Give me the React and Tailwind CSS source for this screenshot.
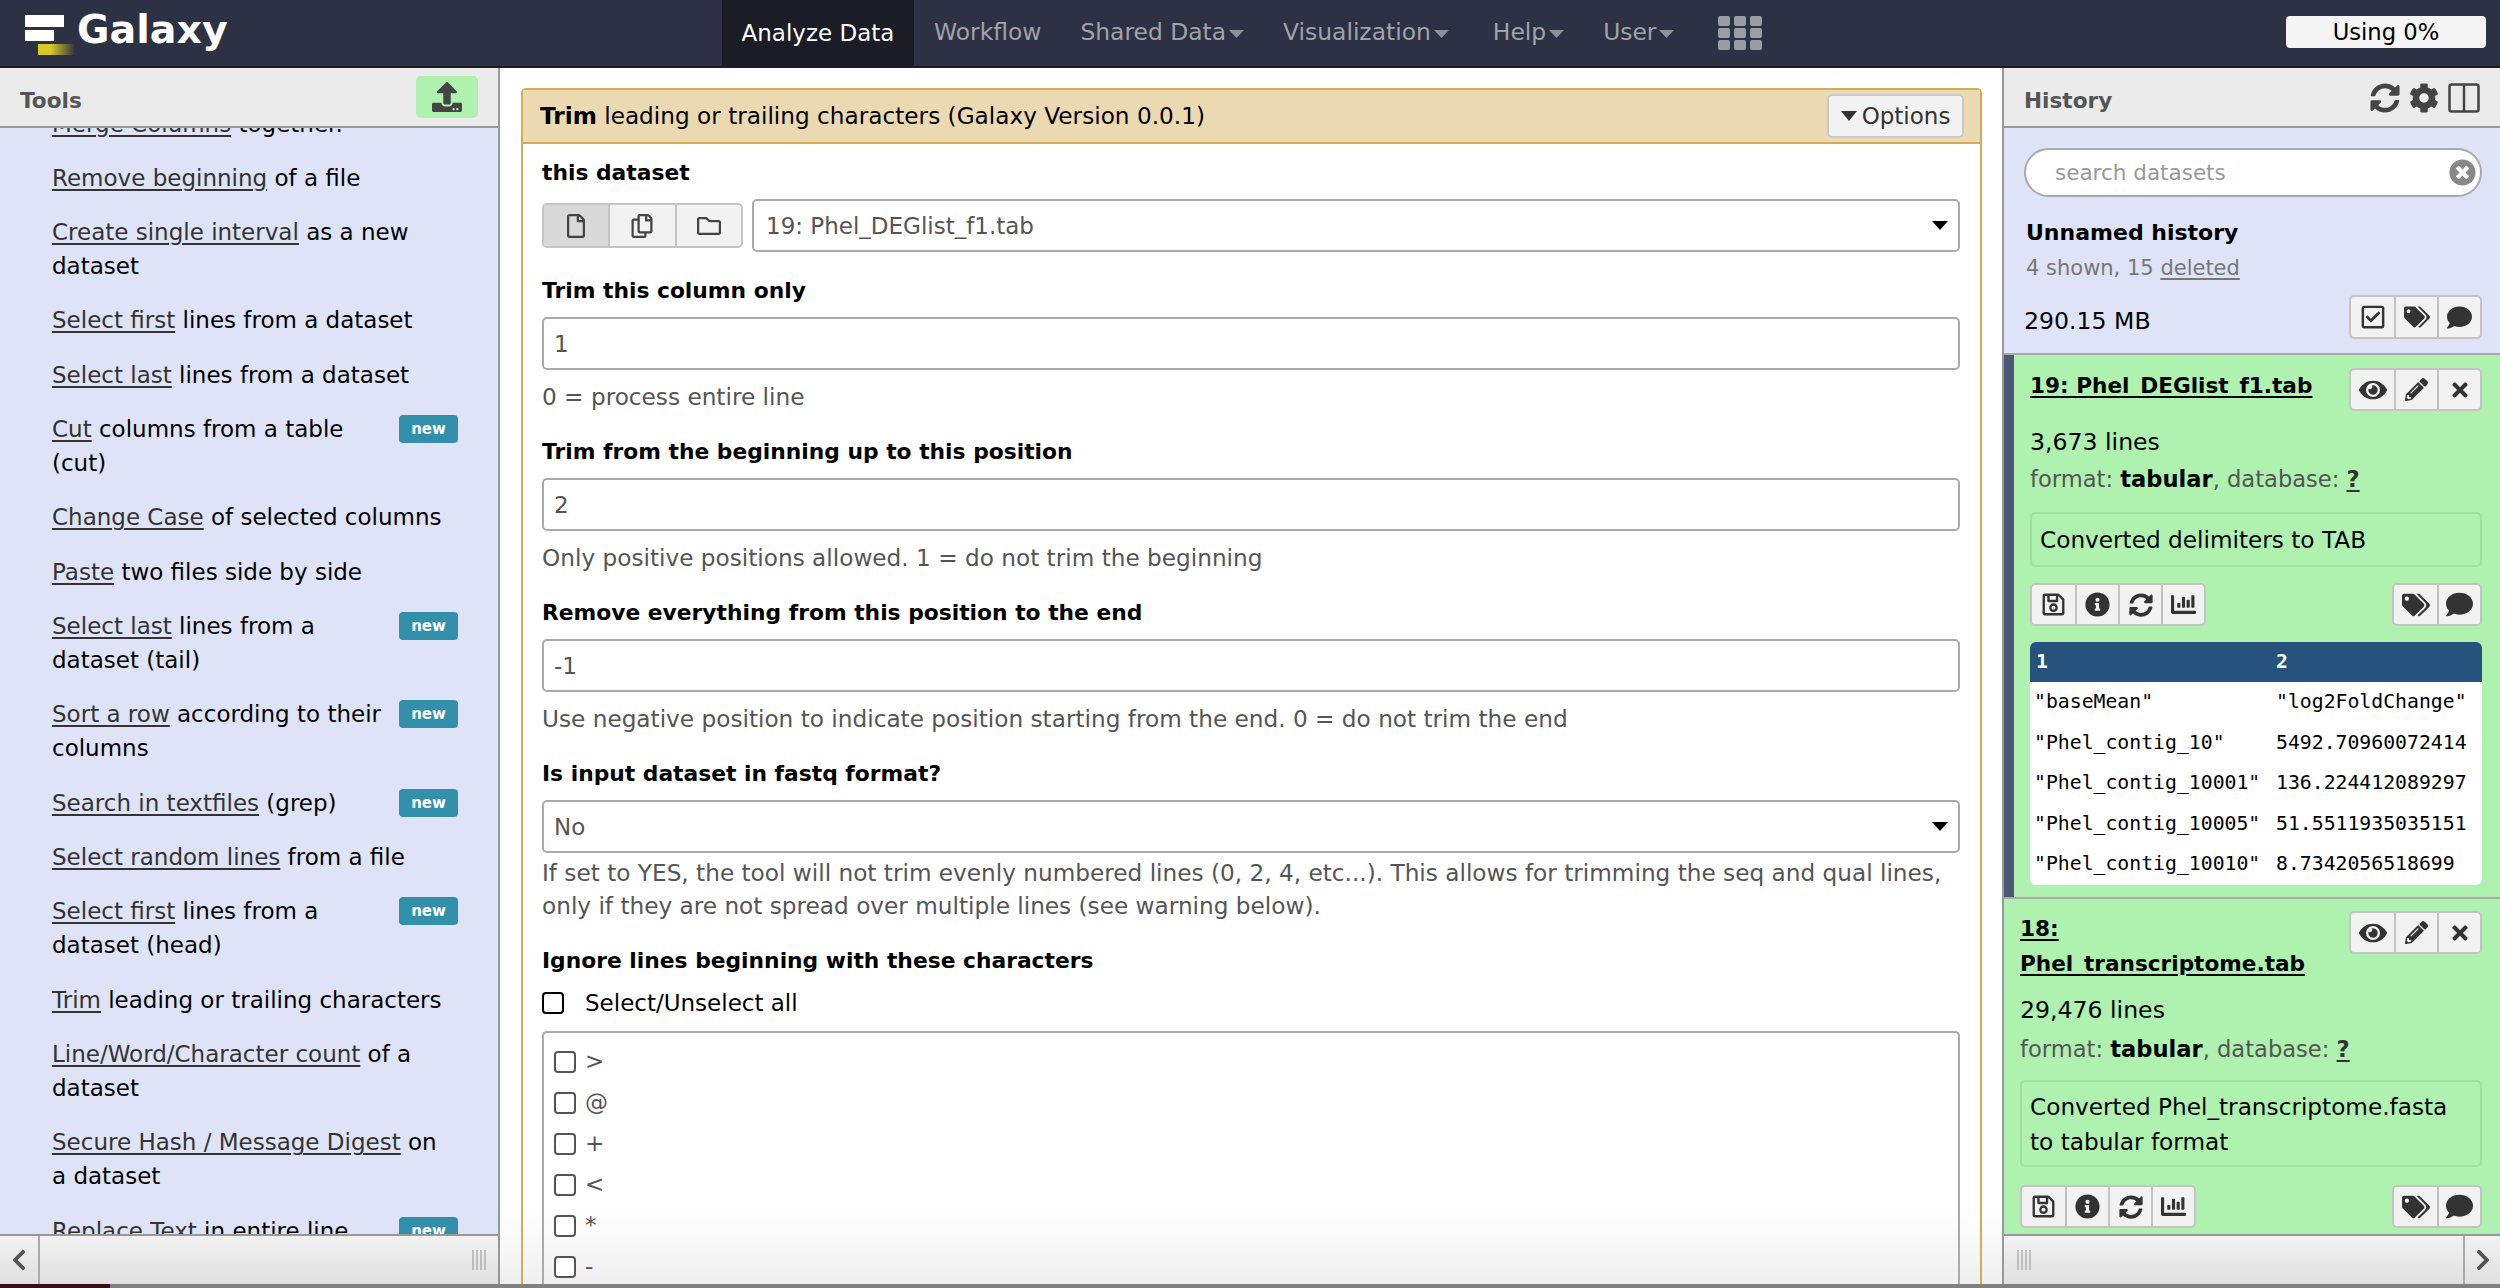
import React from "react";
import {
  FaUpload, FaRegFile, FaRegCopy, FaRegFolder, FaSyncAlt, FaCog,
  FaTimesCircle, FaRegCheckSquare, FaTags, FaComment, FaEye, FaPencilAlt, FaTimes,
  FaRegSave, FaInfoCircle, FaChartBar, FaChevronLeft, FaChevronRight,
} from "react-icons/fa";

const tools = [
  { lines: [["Merge Columns", " together."]] },
  { lines: [["Remove beginning", " of a file"]] },
  { lines: [["Create single interval", " as a new"], ["", "dataset"]] },
  { lines: [["Select first", " lines from a dataset"]] },
  { lines: [["Select last", " lines from a dataset"]] },
  { lines: [["Cut", " columns from a table"], ["", "(cut)"]], isNew: true },
  { lines: [["Change Case", " of selected columns"]] },
  { lines: [["Paste", " two files side by side"]] },
  { lines: [["Select last", " lines from a"], ["", "dataset (tail)"]], isNew: true },
  { lines: [["Sort a row", " according to their"], ["", "columns"]], isNew: true },
  { lines: [["Search in textfiles", " (grep)"]], isNew: true },
  { lines: [["Select random lines", " from a file"]] },
  { lines: [["Select first", " lines from a"], ["", "dataset (head)"]], isNew: true },
  { lines: [["Trim", " leading or trailing characters"]] },
  { lines: [["Line/Word/Character count", " of a"], ["", "dataset"]] },
  { lines: [["Secure Hash / Message Digest", " on"], ["", "a dataset"]] },
  { lines: [["Replace Text", " in entire line"]], isNew: true },
];

function Caret({ w = 16, h = 9, className = "" }) {
  return (
    <svg width={w} height={h} viewBox="0 0 16 9" preserveAspectRatio="none" className={`fill-current shrink-0 ${className}`}>
      <polygon points="0,0 16,0 8,9" />
    </svg>
  );
}

function Grip() {
  return (
    <div className="flex gap-[2px] h-[20px]">
      <div className="w-[2px] bg-[#bdbdbd]" />
      <div className="w-[2px] bg-[#bdbdbd]" />
      <div className="w-[2px] bg-[#bdbdbd]" />
      <div className="w-[2px] bg-[#bdbdbd]" />
    </div>
  );
}

function ToolItem({ item }) {
  return (
    <div className="flex shrink-0 items-start justify-between text-[23px] leading-[34px] text-black whitespace-nowrap">
      <div>
        {item.lines.map((l, i) => (
          <div key={i}>
            {l[0] && <span className="text-[#333] underline underline-offset-[3px]">{l[0]}</span>}
            {l[1]}
          </div>
        ))}
      </div>
      {item.isNew && (
        <span className="mt-[3px] flex h-[28px] w-[59px] shrink-0 items-center justify-center rounded-[4px] bg-[#3390ab] text-[15px] font-bold text-white">
          new
        </span>
      )}
    </div>
  );
}

function Label({ children }) {
  return <div className="h-[30px] pt-[1px] text-[21.8px] font-bold leading-[30px] text-black whitespace-nowrap">{children}</div>;
}

function TextInput({ value }) {
  return (
    <div className="mt-[12px] flex h-[53px] items-center rounded-[5px] border-2 border-[#aaa] bg-white px-[10px] pt-[2px] text-[23px] text-[#555]">
      {value}
    </div>
  );
}

function Help({ children }) {
  return <div className="text-[23.2px] leading-[33px] text-[#555] whitespace-nowrap">{children}</div>;
}

function CheckItem({ ch }) {
  return (
    <div className="flex h-[41px] items-center gap-[9px] text-[23px] text-[#555]">
      <div className="h-[22px] w-[22px] rounded-[4px] border-2 border-[#555] bg-white" />
      <span>{ch}</span>
    </div>
  );
}

function BtnGroup({ icons, w, h }) {
  return (
    <div className={`flex rounded-[5px] border-2 border-[#c4c4c4] bg-[#f2f2f2] text-[#333] ${h}`}>
      {icons.map((Ic, i) => (
        <div key={i} className={`flex items-center justify-center ${w} ${i ? "border-l-2 border-[#c4c4c4]" : ""}`}>
          {Ic}
        </div>
      ))}
    </div>
  );
}

const eyeIcons = [<FaEye size={28} />, <FaPencilAlt size={23} />, <FaTimes size={22} />];
const leftIcons = [<FaRegSave size={25} />, <FaInfoCircle size={25} />, <FaSyncAlt size={24} />, <FaChartBar size={25} />];
const rightIcons = [<FaTags size={28} />, <FaComment size={27} />];

function Dataset({ stripe, title, lines, box, children }) {
  return (
    <div className="flex shrink-0 border-t-2 border-[#aaa] bg-[#aff1af] text-black">
      {stripe && <div className="w-[10px] shrink-0 bg-[#4e5777]" />}
      <div className="flex-1 min-w-0 pl-[16px] pr-[18px]">
        <div className={`flex items-start justify-between ${stripe ? "pt-[13px]" : "pt-[12px]"}`}>
          <div className="text-[21.6px] font-bold leading-[35px] underline underline-offset-[3px] whitespace-nowrap">{title}</div>
          <BtnGroup icons={eyeIcons} w="w-[43px]" h="h-[43px]" />
        </div>
        <div className={`${stripe ? "mt-[12.5px]" : "mt-[10.5px]"} text-[23.6px] leading-[37px]`}>{lines}</div>
        <div className={`text-[22.6px] leading-[37px] text-[#555] ${stripe ? "" : "mt-[2px]"}`}>
          format: <b className="text-black">tabular</b>, database: <b className="text-[#333] underline underline-offset-[3px]">?</b>
        </div>
        <div className={`rounded-[5px] border-2 border-[#a0dfa0] px-[8px] text-[23.2px] leading-[35px] ${stripe ? "mt-[14.5px] py-[8px]" : "mt-[12.5px] py-[6.5px]"}`}>{box}</div>
        <div className={`flex justify-between ${stripe ? "mt-[16px]" : "mt-[18px]"}`}>
          <BtnGroup icons={leftIcons} w="w-[43px]" h="h-[43px]" />
          <BtnGroup icons={rightIcons} w="w-[43px]" h="h-[43px]" />
        </div>
        {children}
        <div className={stripe ? "h-[12px]" : "h-[6px]"} />
      </div>
    </div>
  );
}

const rows = [
  ['"baseMean"', '"log2FoldChange"'],
  ['"Phel_contig_10"', "5492.70960072414"],
  ['"Phel_contig_10001"', "136.224412089297"],
  ['"Phel_contig_10005"', "51.5511935035151"],
  ['"Phel_contig_10010"', "8.7342056518699"],
];

function Nav({ children, caret, className = "" }) {
  return (
    <div className={`flex items-center gap-[3px] whitespace-nowrap text-[#a0a3a9] ${className}`}>
      {children}
      {caret && <Caret w={15} h={8} className="mt-[3px] text-[#8e919a]" />}
    </div>
  );
}

export default function App() {
  return (
    <div className="flex h-screen w-full flex-col overflow-hidden bg-white font-['DejaVu_Sans',sans-serif]">
      {/* top navigation */}
      <header className="flex h-[68px] shrink-0 items-stretch border-b-2 border-[#1a1c26] bg-[#2c3143] text-[23.4px]">
        <div className="flex w-[722px] items-center pl-[25px]">
          <svg width="50" height="42" viewBox="0 0 50 42" className="mt-[5px]">
            <defs>
              <linearGradient id="gy" x1="0" x2="1">
                <stop offset="0.35" stopColor="#d9c826" />
                <stop offset="1" stopColor="#d9c826" stopOpacity="0.05" />
              </linearGradient>
            </defs>
            <rect x="0" y="0" width="39" height="12" fill="#fff" />
            <rect x="0" y="15" width="29" height="11" fill="#fff" />
            <rect x="13" y="29" width="36" height="11" fill="url(#gy)" />
          </svg>
          <span className="ml-[2px] mb-[6px] text-[39.6px] font-bold leading-none text-white">Galaxy</span>
        </div>
        <div className="flex w-[192px] items-center justify-center bg-[#1a1c26] text-[23px] text-white">Analyze Data</div>
        <div className="ml-[20px] flex items-center gap-[39px]">
          <Nav>Workflow</Nav>
          <Nav caret>Shared Data</Nav>
          <Nav caret>Visualization</Nav>
          <Nav caret className="ml-[5px]">Help</Nav>
          <Nav caret>User</Nav>
          <svg width="44" height="34" viewBox="0 0 44 34" className="ml-[5px] fill-[#9a9da3]">
            <rect x="0" y="0" width="12" height="10" rx="2" />
            <rect x="16" y="0" width="12" height="10" rx="2" />
            <rect x="32" y="0" width="12" height="10" rx="2" />
            <rect x="0" y="12" width="12" height="10" rx="2" />
            <rect x="16" y="12" width="12" height="10" rx="2" />
            <rect x="32" y="12" width="12" height="10" rx="2" />
            <rect x="0" y="24" width="12" height="10" rx="2" />
            <rect x="16" y="24" width="12" height="10" rx="2" />
            <rect x="32" y="24" width="12" height="10" rx="2" />
          </svg>
        </div>
        <div className="ml-auto mr-[14px] mt-[16px] flex h-[32px] w-[200px] items-center justify-center rounded-[4px] bg-[#f5f5f5] text-[22.7px] text-black">
          Using 0%
        </div>
      </header>

      <div className="flex min-h-0 flex-1">
        {/* tools panel */}
        <aside className="flex w-[500px] shrink-0 flex-col border-r-2 border-[#999] bg-[#dee3f7]">
          <div className="flex h-[60px] shrink-0 items-start justify-between border-b-2 border-[#999] bg-[#ebebeb] pl-[20px] pr-[20px]">
            <span className="mt-[18px] text-[21.6px] font-bold leading-[30px] text-[#555]">Tools</span>
            <div className="mt-[8px] flex h-[42px] w-[62px] items-center justify-center rounded-[5px] bg-[#aff1af] text-[#444]">
              <FaUpload size={30} />
            </div>
          </div>
          <div className="flex min-h-0 flex-1 flex-col gap-[20.33px] overflow-hidden pl-[52px] pr-[40px]">
            <div className="mt-[-21.5px] shrink-0">
              <ToolItem item={tools[0]} />
            </div>
            {tools.slice(1).map((t, i) => (
              <ToolItem key={i} item={t} />
            ))}
          </div>
          <div className="flex h-[50px] shrink-0 items-stretch border-t-2 border-[#999] bg-gradient-to-b from-[#f2f2f2] to-[#e0e0e0]">
            <div className="flex w-[40px] items-center justify-center border-r-2 border-[#aaa] text-[#555]">
              <FaChevronLeft size={24} />
            </div>
            <div className="ml-auto mr-[12px] flex items-center">
              <Grip />
            </div>
          </div>
        </aside>

        {/* center */}
        <main className="min-w-0 flex-1 overflow-hidden bg-gradient-to-b from-white from-94% to-[#efefef] pl-[21px] pr-[20px] pt-[20px]">
          <div className="rounded-t-[5px] border-2 border-b-0 border-[#d4ab57]">
            <div className="flex h-[54px] items-center justify-between border-b-2 border-[#d4ab57] bg-[#ebd9b2] pl-[17px] pr-[16px] text-[23.2px] text-black">
              <span className="whitespace-nowrap"><b>Trim</b> leading or trailing characters (Galaxy Version 0.0.1)</span>
              <div className="flex h-[44px] w-[137px] items-center justify-center gap-[5px] rounded-[5px] border-2 border-[#c9c9c9] bg-[#f2f2f2] text-[23px] text-[#333]">
                <Caret w={16} h={10} />
                Options
              </div>
            </div>
            <div className="pl-[19px] pr-[20px] pt-[13px]">
              <Label>this dataset</Label>
              <div className="mt-[12px] flex items-center gap-[9px]">
                <div className="flex h-[45px] w-[201px] shrink-0 rounded-[5px] border-2 border-[#c4c4c4] bg-[#f2f2f2] text-[#444]">
                  <div className="flex flex-1 items-center justify-center bg-[#d9d9d9]"><FaRegFile size={24} /></div>
                  <div className="flex flex-1 items-center justify-center border-l-2 border-[#c4c4c4]"><FaRegCopy size={24} /></div>
                  <div className="flex flex-1 items-center justify-center border-l-2 border-[#c4c4c4]"><FaRegFolder size={24} /></div>
                </div>
                <div className="flex h-[53px] flex-1 items-center justify-between rounded-[5px] border-2 border-[#aaa] bg-white pl-[12px] pr-[10px] text-[23px] text-[#555]">
                  <span className="pt-[2px]">19: Phel_DEGlist_f1.tab</span>
                  <Caret className="text-black" />
                </div>
              </div>

              <div className="mt-[23px]"><Label>Trim this column only</Label></div>
              <TextInput value="1" />
              <div className="mb-[23px] mt-[10px]"><Help>0 = process entire line</Help></div>

              <Label>Trim from the beginning up to this position</Label>
              <TextInput value="2" />
              <div className="mb-[23px] mt-[10px]"><Help>Only positive positions allowed. 1 = do not trim the beginning</Help></div>

              <Label>Remove everything from this position to the end</Label>
              <TextInput value="-1" />
              <div className="mb-[23px] mt-[10px]"><Help>Use negative position to indicate position starting from the end. 0 = do not trim the end</Help></div>

              <Label>Is input dataset in fastq format?</Label>
              <div className="mt-[12px] flex h-[53px] items-center justify-between rounded-[5px] border-2 border-[#aaa] bg-white pl-[10px] pr-[10px] text-[23px] text-[#555]">
                <span className="pt-[2px]">No</span>
                <Caret className="text-black" />
              </div>
              <div className="mb-[23px] mt-[3px]">
                <Help>If set to YES, the tool will not trim evenly numbered lines (0, 2, 4, etc...). This allows for trimming the seq and qual lines,<br />only if they are not spread over multiple lines (see warning below).</Help>
              </div>

              <Label>Ignore lines beginning with these characters</Label>
              <div className="mt-[13px] flex h-[30px] items-center gap-[21px] text-[23px] text-black">
                <div className="h-[22px] w-[22px] rounded-[4px] border-2 border-black bg-white" />
                Select/Unselect all
              </div>
              <div className="mt-[13px] rounded-t-[5px] border-2 border-b-0 border-[#aaa] pl-[10px] pt-[8px]">
                <CheckItem ch=">" />
                <CheckItem ch="@" />
                <CheckItem ch="+" />
                <CheckItem ch="<" />
                <CheckItem ch="*" />
                <CheckItem ch="-" />
              </div>
            </div>
          </div>
        </main>

        {/* history panel */}
        <aside className="flex w-[498px] shrink-0 flex-col border-l-2 border-[#999] bg-[#dee3f7]">
          <div className="flex h-[60px] shrink-0 items-start justify-between border-b-2 border-[#999] bg-[#ebebeb] pl-[20px] pr-[20px]">
            <span className="mt-[18px] text-[21.6px] font-bold leading-[30px] text-[#555]">History</span>
            <div className="mt-[15px] flex items-center gap-[9px] text-[#444]">
              <FaSyncAlt size={30} />
              <FaCog size={30} />
              <svg width="32" height="30" viewBox="0 0 32 30" fill="none" stroke="currentColor" strokeWidth="2.5">
                <rect x="1.5" y="1.5" width="29" height="27" rx="2" />
                <line x1="16" y1="1.5" x2="16" y2="28.5" />
              </svg>
            </div>
          </div>
          <div className="flex min-h-0 flex-1 flex-col overflow-hidden">
            <div className="shrink-0 pl-[20px] pr-[18px] pt-[20px]">
              <div className="flex h-[49px] items-center justify-between rounded-full border-2 border-[#aaa] bg-white pl-[29px] pr-[4px] text-[21.5px] text-[#999]">
                <span className="pt-[2px]">search datasets</span>
                <FaTimesCircle size={27} className="text-[#888]" />
              </div>
              <div className="mt-[21px] pl-[2px] text-[22px] font-bold leading-[30px] text-black">Unnamed history</div>
              <div className="mt-[5px] pl-[2px] text-[21px] leading-[30px] text-[#777]">
                4 shown, 15 <span className="underline underline-offset-[3px]">deleted</span>
              </div>
              <div className="mt-[12px] flex h-[44px] items-center justify-between">
                <span className="mt-[10px] text-[23.6px] text-black">290.15 MB</span>
                <BtnGroup icons={[<FaRegCheckSquare size={26} />, <FaTags size={26} />, <FaComment size={25} />]} w="w-[43px]" h="h-[44px]" />
              </div>
              <div className="h-[14px]" />
            </div>
            <Dataset stripe title="19: Phel_DEGlist_f1.tab" lines="3,673 lines" box="Converted delimiters to TAB">
              <div className="mt-[16px] h-[243px] overflow-hidden rounded-[6px] bg-white font-['DejaVu_Sans_Mono',monospace] text-[19.8px] text-black">
                <div className="flex h-[40px] items-center bg-[#25537b] font-bold text-white">
                  <span className="w-[246px] shrink-0 pl-[6px]">1</span>
                  <span className="shrink-0">2</span>
                </div>
                {rows.map((r, i) => (
                  <div key={i} className="flex h-[40.4px] items-center whitespace-pre">
                    <span className="w-[246px] shrink-0 pl-[4px]">{r[0]}</span>
                    <span className="shrink-0">{r[1]}</span>
                  </div>
                ))}
              </div>
            </Dataset>
            <Dataset title={<>18:<br />Phel_transcriptome.tab</>} lines="29,476 lines" box={<>Converted Phel_transcriptome.fasta<br />to tabular format</>} />
          </div>
          <div className="flex h-[50px] shrink-0 items-stretch justify-between border-t-2 border-[#999] bg-gradient-to-b from-[#f2f2f2] to-[#e0e0e0]">
            <div className="ml-[13px] flex items-center">
              <Grip />
            </div>
            <div className="flex w-[37px] items-center justify-center border-l-2 border-[#aaa] text-[#555]">
              <FaChevronRight size={24} />
            </div>
          </div>
        </aside>
      </div>

      <div className="flex h-[4px] shrink-0 bg-[#808080]">
        <div className="h-full w-[110px] bg-[#3a0d14]" />
      </div>
    </div>
  );
}
